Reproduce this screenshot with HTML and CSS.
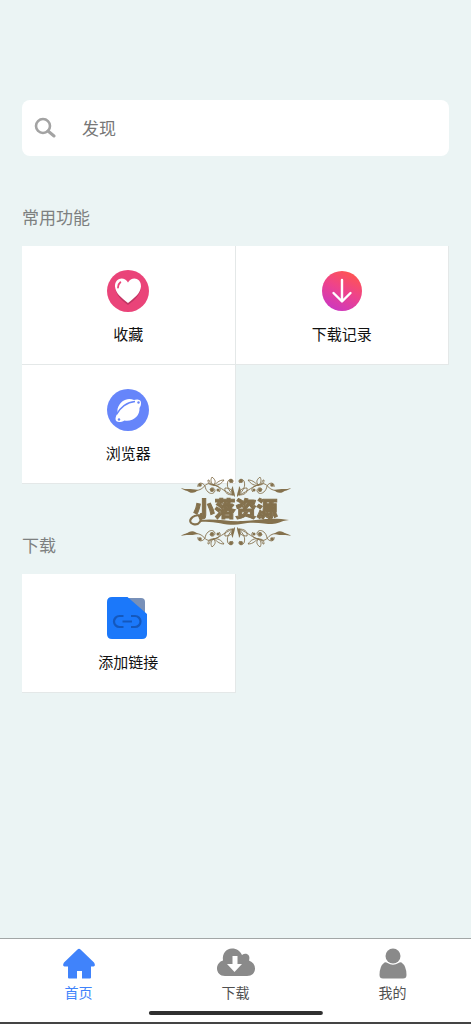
FILE: index.html
```html
<!DOCTYPE html>
<html lang="zh-CN">
<head>
    <meta charset="UTF-8">
    <meta name="viewport" content="width=device-width, initial-scale=1.0">
    <title>首页</title>
    <link rel="stylesheet" href="styles.css">
</head>
<body>
    <main>
        <form class="search">
            <svg class="search-icon" viewBox="0 0 22 22" aria-hidden="true">
                <circle cx="9" cy="9" r="7" fill="none" stroke="#a3a3a3" stroke-width="2.600"/>
                <path d="M14 14l6 5" stroke="#a3a3a3" stroke-width="3" stroke-linecap="round"/>
            </svg>
            <input type="text" placeholder="发现" aria-label="发现">
        </form>

        <h2>常用功能</h2>
        <div class="grid">
            <a class="card" href="#">
                <!-- Heart -->
                <svg viewBox="0 0 44 44" aria-hidden="true">
                    <circle cx="22" cy="22" r="21" fill="#ea4479"/>
                    <path fill="#c23463" d="M22 36C15 31 10 26 9.500 19.500C9 12 17 7 22 14C27 7 35 12 34.800 19.500C34 26 29 31 22 36z"/>
                    <path fill="#fff" d="M22 34C15 28.500 9.500 24 9 17.500C8.700 8.500 18.500 7 22 13.500C25.500 7 35.300 8.500 35 17.500C34.500 24 29 28.500 22 34z"/>
                    <path d="M12 18.500c0-3 .8-4 2.400-5.200" fill="none" stroke="#ea4479" stroke-width="1.800" stroke-linecap="round"/>
                </svg>
                <span>收藏</span>
            </a>
            <a class="card" href="#">
                <!-- Down arrow -->
                <svg viewBox="0 0 44 44" aria-hidden="true">
                    <defs>
                        <linearGradient id="sunset" x1="0.200" y1="1" x2="0.700" y2="0">
                            <stop offset="0" stop-color="#c936c5"/>
                            <stop offset="0.550" stop-color="#ee438b"/>
                            <stop offset="1" stop-color="#ff5550"/>
                        </linearGradient>
                    </defs>
                    <circle cx="22" cy="22" r="20" fill="url(#sunset)"/>
                    <path d="M22 11v21M13.500 24l8.500 8.500 8.500-8.500" fill="none" stroke="#fff" stroke-width="2.400" stroke-linecap="round" stroke-linejoin="round"/>
                </svg>
                <span>下载记录</span>
            </a>
            <a class="card" href="#">
                <!-- Planet -->
                <svg viewBox="0 0 44 44" aria-hidden="true">
                    <circle cx="22" cy="22" r="21" fill="#6685fa"/>
                    <path d="M11.500 21C14 12 22 9 28 12C30 11 35.500 11 35 15C35 17 34.500 18.500 33.500 20C34 28 27 34 18.500 32.500C14 35 9.500 34.500 9.500 31C9.500 29 10.500 27 11.500 25z" fill="#fff"/>
                    <path d="M29 13.500C21 14 14 19.500 10.500 26.500" fill="none" stroke="#6685fa" stroke-width="1.500"/>
                    <circle cx="32.500" cy="14.500" r="1.200" fill="#6685fa"/>
                    <circle cx="13" cy="31.500" r="1.200" fill="#6685fa"/>
                </svg>
                <span>浏览器</span>
            </a>
        </div>

        <h2>下载</h2>
        <div class="grid">
            <a class="card" href="#">
                <!-- Document with a link -->
                <svg viewBox="0 0 44 44" aria-hidden="true">
                    <path fill="#7890b8" d="M21 1h14q4 0 4 4V18z"/>
                    <path fill="#1b78fa" d="M6 0h15.500L41 17v20q0 5-5 5H6q-5 0-5-5V5q0-5 5-5z"/>
                    <path d="M17.500 19h-4a5.500 5.500 0 0 0 0 11h4M25 19h4a5.500 5.500 0 0 1 0 11h-4M16.500 24.500h9.500" fill="none" stroke="#1458bd" stroke-width="2.200"/>
                </svg>
                <span>添加链接</span>
            </a>
        </div>
    </main>

    <nav class="tabbar">
        <a class="tab active" href="#">
            <svg viewBox="0 0 38 32" aria-hidden="true">
                <path fill="currentColor" d="M17.500 1.500q1.500-1.500 3 0L34 14.500q2 3.500-.5 4H31V29.500q0 1-1 1H22V23h-5v7.500H9q-1 0-1-1V18.500H4.500Q2 18 4 14.500z"/>
            </svg>
            <span>首页</span>
        </a>
        <a class="tab" href="#">
            <svg viewBox="0 0 38 32" aria-hidden="true">
                <path fill="#8a8a8a" d="M8 28C3 28 0 24.500 0 20.500C0 16.500 2.500 13.500 6 12.500C5 5.500 9 .5 15 .5C20 .5 23 3 25 7C29 4 34 7 32 12.500C36 14 38 17 38 20.500C38 25 35 28 30 28z"/>
                <path fill="#fff" d="M15.500 8h5v8h4.500l-7.500 8-7.500-8h5.500z"/>
            </svg>
            <span>下载</span>
        </a>
        <a class="tab" href="#">
            <svg viewBox="0 0 38 32" aria-hidden="true">
                <circle cx="19" cy="8" r="7.500" fill="#8a8a8a"/>
                <path fill="#8a8a8a" d="M10.500 14.500Q12 14 13.500 15Q19 18.500 24.500 15Q26 14 27.500 14.500Q32.500 18 32.500 27q0 3.500-3.500 3.500H9q-3.500 0-3.500-3.500Q5.500 18 10.500 14.500z"/>
            </svg>
            <span>我的</span>
        </a>
        <div class="home-indicator"></div>
    </nav>

    <div class="watermark">
        <svg viewBox="0 0 110 70" aria-hidden="true">
            <defs>
                <g id="scroll" fill="none" stroke="#84714d" stroke-width="0.900">
                    <path fill="#84714d" stroke="none" d="M0 11C5 13 9 11 17 13C15 15 12 17 8 15C6 13 3 14 0 11z"/>
                    <path d="M15 13.500C24 13 23 5 30 7C39 9 42 14 52 18M17 10C16 5 22 5 24 9C25 16 32 19 34 14C34 10 29 10 29 13M32 8C38 9 41 12 38 15M52 18C48 13 45 10 47 4C50 0 54 4 51 6"/>
                    <path d="M32 8C27 6 30 3 27 3C27 7 29 8 32 8C29 4 30 2 31 0C35 3 35 6 32 8C36 7 37 3 43 3C40 7 37 9 32 8"/>
                    <path d="M44 11C43 16 47 18 52 18C52 13 49 11 44 11z"/>
                    <g fill="#84714d" stroke="none">
                        <circle cx="19" cy="8" r="1.800"/>
                        <circle cx="31" cy="13" r="2"/>
                        <circle cx="37" cy="13" r="1.500"/>
                        <circle cx="50" cy="4" r="2"/>
                        <path d="M54 20C50 17 49 13 52 9C52 13 54 15 54 20z"/>
                    </g>
                </g>
                <g id="border">
                    <use href="#scroll"/>
                    <use href="#scroll" transform="matrix(-1 0 0 1 110 0)"/>
                </g>
            </defs>
            <use href="#border"/>
            <use href="#border" transform="matrix(1 0 0 -1 0 70)"/>
            <!-- Ribbon under the name -->
            <path d="M20 38C10 38 6 45 12 47C18 49 21 44 20 36" fill="none" stroke="#84714d" stroke-width="2.200"/>
            <path fill="#84714d" d="M19 43C35 41 47 45 62 44C77 43 91 40 108 43C99 44 97 47 91 47C84 47 73 44 60 47C47 50 34 43 19 45z"/>
        </svg>
        <span>小落资源</span>
    </div>
</body>
</html>
```
FILE: styles.css
```css
* {
    box-sizing: border-box;
}
body {
    background-color: #ebf4f4;
    color: #111;
    font-family: "Noto Sans CJK SC", sans-serif;
    margin: 0;
    min-height: 100vh;
    display: flex;
    flex-direction: column;
}
main {
    flex: 1;
    padding: 100px 22px 20px;
}
a {
    color: inherit;
    text-decoration: none;
}
.search {
    display: flex;
    align-items: center;
    gap: 26px;
    height: 56px;
    padding: 0 12px;
    border-radius: 8px;
    background-color: #fff;
}
.search-icon {
    width: 22px;
    height: 22px;
    flex: none;
}
.search input {
    flex: 1;
    min-width: 0;
    padding: 0 0 2px;
    border: none;
    outline: none;
    background: none;
    font-family: inherit;
    font-size: 17px;
    color: #333;
}
.search input::placeholder {
    color: #777;
    opacity: 1;
}
h2 {
    margin: 49px 0 17px;
    font-size: 17px;
    line-height: 24px;
    font-weight: 400;
    color: #7d8080;
}
.grid {
    display: grid;
    grid-template-columns: 1fr 1fr;
}
.card {
    display: flex;
    flex-direction: column;
    align-items: center;
    gap: 9px;
    padding: 23px 0 18px;
    background-color: #fff;
    border-right: 1px solid #e4e8e8;
    border-bottom: 1px solid #e4e8e8;
    font-size: 15px;
    line-height: 24px;
}
.card svg {
    width: 44px;
    height: 44px;
}
.tabbar {
    position: relative;
    display: flex;
    height: 86px;
    padding-top: 9px;
    background-color: #fff;
    border-top: 1px solid #a2a6a6;
    border-bottom: 2px solid #444;
}
.tab {
    flex: 1;
    display: flex;
    flex-direction: column;
    align-items: center;
    gap: 2px;
    font-size: 14px;
    line-height: 20px;
    color: #505050;
}
.tab svg {
    width: 38px;
    height: 32px;
}
.active {
    color: #4083fb;
}
.home-indicator {
    position: absolute;
    bottom: 7px;
    left: 50%;
    width: 37%;
    height: 4px;
    border-radius: 2px;
    background-color: #303030;
    transform: translateX(-50%);
}
.watermark {
    position: fixed;
    top: 50%;
    left: 50%;
    width: 110px;
    height: 70px;
    transform: translate(-50%, -50%);
    pointer-events: none;
}
.watermark svg {
    display: block;
    width: 100%;
    height: 100%;
}
.watermark span {
    position: absolute;
    top: 18px;
    left: 0;
    width: 100%;
    text-align: center;
    font-size: 21px;
    line-height: 24px;
    font-weight: 900;
    color: #84714d;
    -webkit-text-stroke: 1px #84714d;
}
```
